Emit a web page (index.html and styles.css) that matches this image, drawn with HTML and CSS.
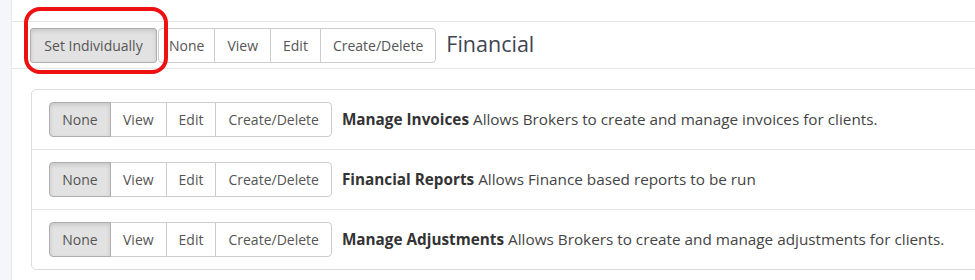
FILE: index.html
```html
<!DOCTYPE html>
<html lang="en">
<head>
    <meta charset="UTF-8">
    <title>Permissions - Financial</title>
    <link rel="stylesheet" href="styles.css">
</head>
<body>
    <div class="page">
        <div class="sidebar"></div>

        <div class="content">
            <div class="section-header">
                <div class="btn-group">
                    <button class="btn active set-individually">Set Individually</button>
                </div>
                <div class="btn-group">
                    <button class="btn btn-narrow">None</button>
                    <button class="btn">View</button>
                    <button class="btn">Edit</button>
                    <button class="btn">Create/Delete</button>
                </div>
                <h2 class="section-title">Financial</h2>
                <div class="highlight"></div>
            </div>

            <div class="panel">
                <div class="perm-row">
                    <div class="btn-group">
                        <button class="btn active">None</button>
                        <button class="btn">View</button>
                        <button class="btn">Edit</button>
                        <button class="btn">Create/Delete</button>
                    </div>
                    <div class="perm-text"><strong>Manage Invoices</strong> Allows Brokers to create and manage invoices for clients.</div>
                </div>

                <div class="perm-row">
                    <div class="btn-group">
                        <button class="btn active">None</button>
                        <button class="btn">View</button>
                        <button class="btn">Edit</button>
                        <button class="btn">Create/Delete</button>
                    </div>
                    <div class="perm-text"><strong>Financial Reports</strong> Allows Finance based reports to be run</div>
                </div>

                <div class="perm-row">
                    <div class="btn-group">
                        <button class="btn active">None</button>
                        <button class="btn">View</button>
                        <button class="btn">Edit</button>
                        <button class="btn">Create/Delete</button>
                    </div>
                    <div class="perm-text"><strong>Manage Adjustments</strong> Allows Brokers to create and manage adjustments for clients.</div>
                </div>
            </div>
        </div>
    </div>
</body>
</html>
```

FILE: styles.css
```css
:root {
    --text: #333;
    --muted: #555;
    --line: #e4e7eb;
    --btn-border: #ccc;
    --active-bg: #e2e2e2;
    --active-border: #adadad;
}

* {
    margin: 0;
    padding: 0;
    box-sizing: border-box;
}

body {
    font-family: "Open Sans", "Liberation Sans", sans-serif;
    background: white;
    color: var(--text);
    overflow: hidden;
}

.page {
    display: flex;
    min-height: 280px;
}

.sidebar {
    width: 12px;
    flex-shrink: 0;
    background: #f4f6f9;
    border-right: 1px solid #e6e9ee;
}

.content {
    flex: 1;
    padding-top: 21px;
    min-width: 0;
}

.section-header {
    position: relative;
    display: flex;
    align-items: center;
    gap: 1px;
    height: 48px;
    padding-left: 18px;
    border-top: 1px solid var(--line);
    border-bottom: 1px solid var(--line);
}

.section-title {
    font-size: 21.5px;
    font-weight: 400;
    color: #3d4552;
    margin-left: 9px;
    margin-top: -3px;
}

.highlight {
    position: absolute;
    left: 12px;
    top: -15px;
    width: 144px;
    height: 67px;
    border: 4px solid #ee1111;
    border-radius: 16px;
}

.btn-group {
    display: flex;
}

.btn {
    font-family: inherit;
    font-size: 14px;
    color: var(--muted);
    background: white;
    border: 1px solid var(--btn-border);
    margin-left: -1px;
    height: 35px;
    padding: 0 12px;
    cursor: pointer;
}

.btn-narrow {
    padding: 0 10px;
}

.btn-group .btn:first-child {
    margin-left: 0;
    border-radius: 4px 0 0 4px;
}

.btn-group .btn:last-child {
    border-radius: 0 4px 4px 0;
}

.btn-group .btn:only-child {
    border-radius: 3px;
}

.btn.active {
    background: var(--active-bg);
    border-color: var(--active-border);
    box-shadow: inset 0 2px 4px rgba(0, 0, 0, 0.12);
    position: relative;
    z-index: 1;
}

.set-individually {
    background: #d6d6d6;
    padding: 0 8px;
    width: 127px;
}

.panel {
    margin: 20px -40px 0 19px;
    border: 1px solid #dcdcdc;
    border-radius: 5px;
}

.perm-row {
    display: flex;
    align-items: center;
    height: 60px;
    padding-left: 17px;
    border-bottom: 1px solid #e6e6e6;
}

.perm-row:last-child {
    height: 59px;
    border-bottom: none;
}

.perm-row .btn-group .btn:first-child {
    width: 62px;
}

.perm-text {
    margin-left: 10px;
    font-size: 15.3px;
    color: #444;
    margin-top: -2px;
}

.perm-text strong {
    font-weight: 700;
    color: #333;
}
```
